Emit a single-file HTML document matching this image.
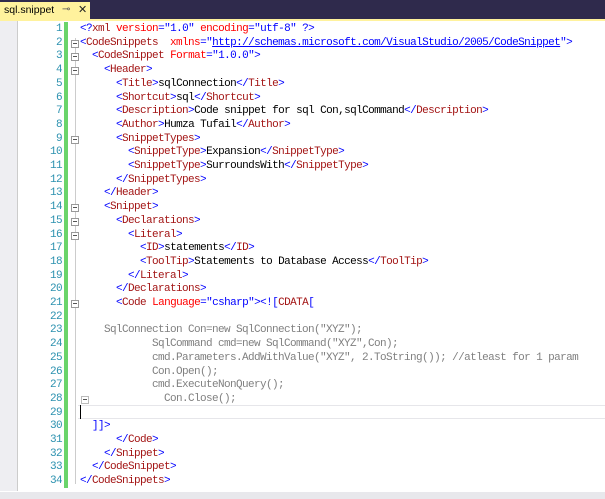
<!DOCTYPE html>
<html><head><meta charset="utf-8"><style>
body{margin:0;width:605px;height:499px;overflow:hidden;background:#fff;position:relative;font-family:"Liberation Mono",monospace;font-size:11px}
#tabbar{position:absolute;left:0;top:0;width:605px;height:19px;background:#2f2a4c}
#tab{position:absolute;left:0;top:2px;width:90px;height:17px;background:#fff29d;font-family:"Liberation Sans",sans-serif;font-size:10.5px;color:#000;line-height:17px;padding-left:4px;box-sizing:border-box;white-space:nowrap;overflow:hidden}
#tabline{position:absolute;left:0;top:19px;width:605px;height:2px;background:#fff29d}
#strip{position:absolute;left:0;top:21px;width:17px;height:470px;background:#eeeef2;border-right:1px solid #ccc}
#green{position:absolute;left:64px;top:22px;width:4px;height:466px;background:#6ad46a}
#bottom{position:absolute;left:0;top:492px;width:605px;height:7px;background:#e8e8ec}
.n{position:absolute;left:20px;width:42px;text-align:right;color:#2b91af;line-height:13.7px;letter-spacing:-0.6px}
.c{position:absolute;left:80px;white-space:pre;line-height:13.7px;color:#000;letter-spacing:-0.6px}
.b{color:#0000ff}.t{color:#a31515}.a{color:#ff0000}.g{color:#808080}
.f{position:absolute;left:71px;width:8px;height:8px;border:1px solid #999;box-sizing:border-box;background:#fff}
.f:after{content:"";position:absolute;left:1px;top:2px;width:4px;height:1px;background:#555}
#guide{position:absolute;left:75px;top:38px;width:1px;height:446px;background:#ccc}
#cur{position:absolute;left:78px;top:405px;width:527px;height:14px;border-top:1px solid #e6e6ea;border-bottom:1px solid #e6e6ea;box-sizing:border-box}
#caret{position:absolute;left:80px;top:405px;width:1px;height:14px;background:#000}
</style></head><body>
<div id="tabbar"></div><div id="tab">sql.snippet</div>
<span style="position:absolute;left:62px;top:4px;font-family:'Liberation Sans',sans-serif;font-size:10px;color:#555">⊸</span>
<span style="position:absolute;left:78px;top:3px;font-family:'Liberation Sans',sans-serif;font-size:11px;color:#222">✕</span>
<div id="tabline"></div>
<div id="strip"></div><div id="green"></div><div id="guide"></div><div id="bottom"></div>
<div id="cur"></div><div id="caret"></div>
<div id="code"></div>
<script>
const L=[
'<span class=b>&lt;?</span><span class=t>xml</span> <span class=a>version</span><span class=b>="1.0"</span> <span class=a>encoding</span><span class=b>="utf-8"</span> <span class=b>?&gt;</span>',
'<span class=b>&lt;</span><span class=t>CodeSnippets</span>  <span class=a>xmlns</span><span class=b>="<u>http://schemas.microsoft.com/VisualStudio/2005/CodeSnippet</u>"&gt;</span>',
'  <span class=b>&lt;</span><span class=t>CodeSnippet</span> <span class=a>Format</span><span class=b>="1.0.0"&gt;</span>',
'    <span class=b>&lt;</span><span class=t>Header</span><span class=b>&gt;</span>',
'      <span class=b>&lt;</span><span class=t>Title</span><span class=b>&gt;</span>sqlConnection<span class=b>&lt;/</span><span class=t>Title</span><span class=b>&gt;</span>',
'      <span class=b>&lt;</span><span class=t>Shortcut</span><span class=b>&gt;</span>sql<span class=b>&lt;/</span><span class=t>Shortcut</span><span class=b>&gt;</span>',
'      <span class=b>&lt;</span><span class=t>Description</span><span class=b>&gt;</span>Code snippet for sql Con,sqlCommand<span class=b>&lt;/</span><span class=t>Description</span><span class=b>&gt;</span>',
'      <span class=b>&lt;</span><span class=t>Author</span><span class=b>&gt;</span>Humza Tufail<span class=b>&lt;/</span><span class=t>Author</span><span class=b>&gt;</span>',
'      <span class=b>&lt;</span><span class=t>SnippetTypes</span><span class=b>&gt;</span>',
'        <span class=b>&lt;</span><span class=t>SnippetType</span><span class=b>&gt;</span>Expansion<span class=b>&lt;/</span><span class=t>SnippetType</span><span class=b>&gt;</span>',
'        <span class=b>&lt;</span><span class=t>SnippetType</span><span class=b>&gt;</span>SurroundsWith<span class=b>&lt;/</span><span class=t>SnippetType</span><span class=b>&gt;</span>',
'      <span class=b>&lt;/</span><span class=t>SnippetTypes</span><span class=b>&gt;</span>',
'    <span class=b>&lt;/</span><span class=t>Header</span><span class=b>&gt;</span>',
'    <span class=b>&lt;</span><span class=t>Snippet</span><span class=b>&gt;</span>',
'      <span class=b>&lt;</span><span class=t>Declarations</span><span class=b>&gt;</span>',
'        <span class=b>&lt;</span><span class=t>Literal</span><span class=b>&gt;</span>',
'          <span class=b>&lt;</span><span class=t>ID</span><span class=b>&gt;</span>statements<span class=b>&lt;/</span><span class=t>ID</span><span class=b>&gt;</span>',
'          <span class=b>&lt;</span><span class=t>ToolTip</span><span class=b>&gt;</span>Statements to Database Access<span class=b>&lt;/</span><span class=t>ToolTip</span><span class=b>&gt;</span>',
'        <span class=b>&lt;/</span><span class=t>Literal</span><span class=b>&gt;</span>',
'      <span class=b>&lt;/</span><span class=t>Declarations</span><span class=b>&gt;</span>',
'      <span class=b>&lt;</span><span class=t>Code</span> <span class=a>Language</span><span class=b>="csharp"&gt;&lt;![</span><span class=t>CDATA</span><span class=b>[</span>',
'',
'<span class=g>    SqlConnection Con=new SqlConnection("XYZ");</span>',
'<span class=g>            SqlCommand cmd=new SqlCommand("XYZ",Con);</span>',
'<span class=g>            cmd.Parameters.AddWithValue("XYZ", 2.ToString()); //atleast for 1 param</span>',
'<span class=g>            Con.Open();</span>',
'<span class=g>            cmd.ExecuteNonQuery();</span>',
'<span class=g>              Con.Close();</span>',
'',
'  <span class=b>]]&gt;</span>',
'      <span class=b>&lt;/</span><span class=t>Code</span><span class=b>&gt;</span>',
'    <span class=b>&lt;/</span><span class=t>Snippet</span><span class=b>&gt;</span>',
'  <span class=b>&lt;/</span><span class=t>CodeSnippet</span><span class=b>&gt;</span>',
'<span class=b>&lt;/</span><span class=t>CodeSnippets</span><span class=b>&gt;</span>'];
const folds=[2,3,4,9,14,15,16,21];
let h='';
L.forEach((s,i)=>{const y=23+i*13.7;
h+=`<div class=n style="top:${y}px">${i+1}</div><div class=c style="top:${y}px">${s}</div>`;
if(folds.includes(i+1))h+=`<div class=f style="top:${y+3}px"></div>`;});
h+=`<div class=f style="top:${23+27*13.7+3}px;left:81px;border-color:#bbb"></div>`;
document.getElementById('code').innerHTML=h;
</script>
</body></html>
